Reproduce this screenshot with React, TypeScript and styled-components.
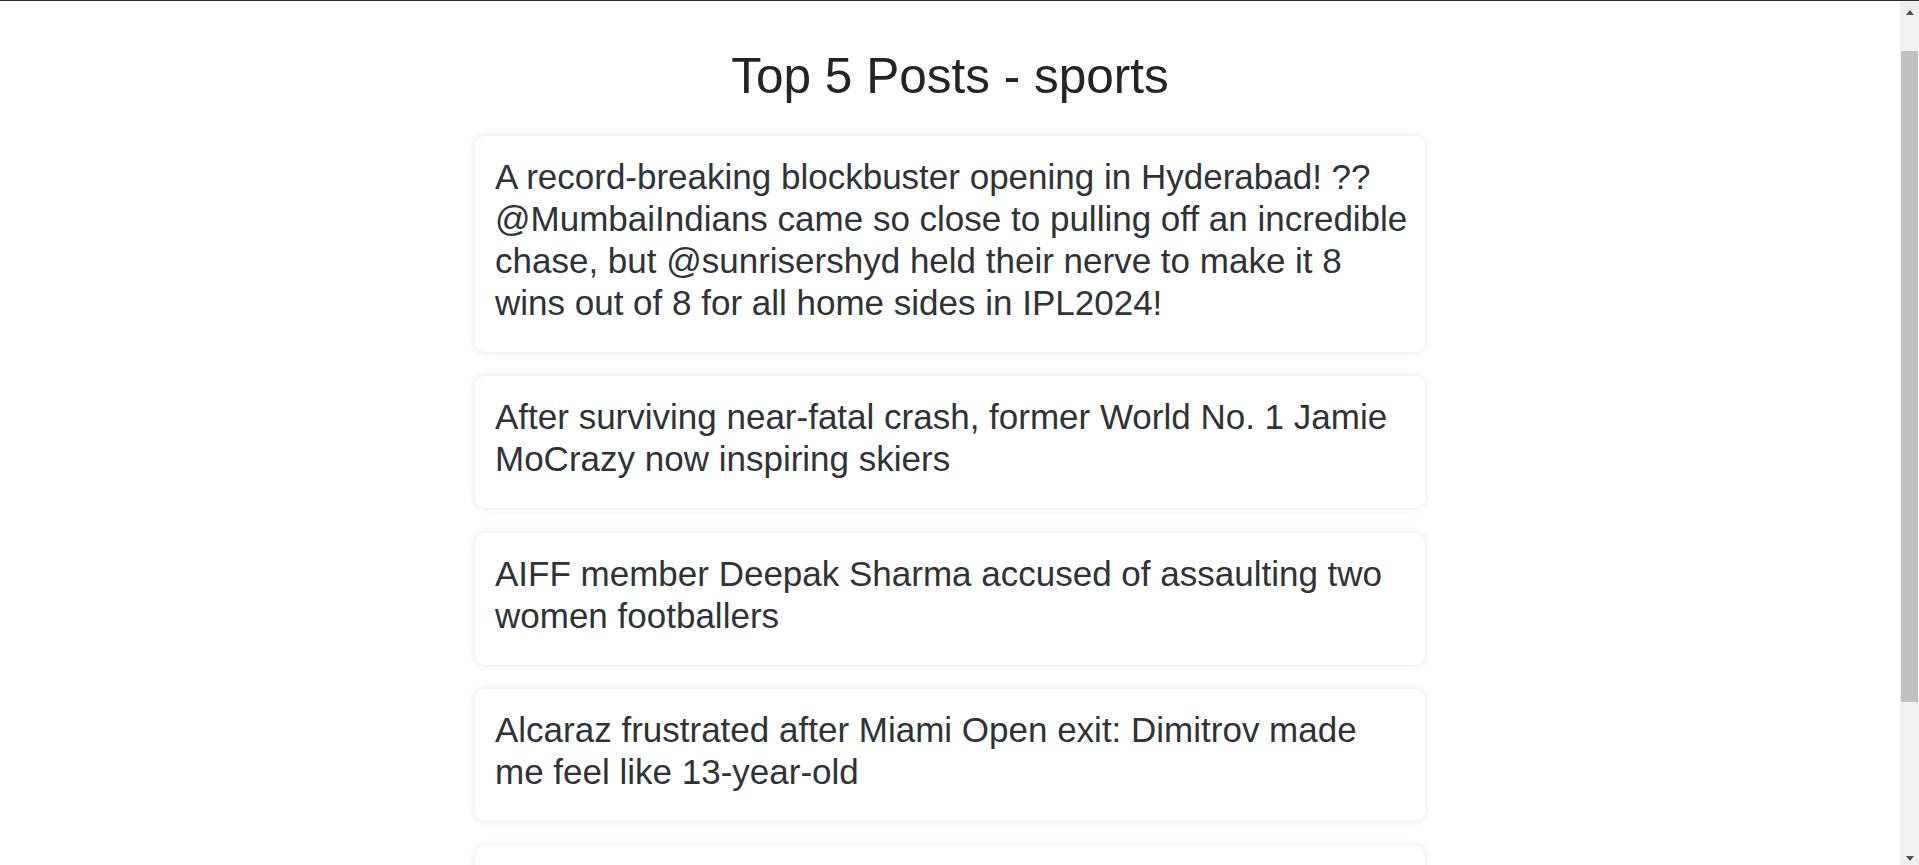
import React from "react";
import styled, { createGlobalStyle } from "styled-components";

const GlobalStyle = createGlobalStyle`
  html, body {
    margin: 0;
    padding: 0;
    height: 100%;
    overflow: hidden;
    background: #ffffff;
  }
  body {
    font-family: "Liberation Sans", Arial, sans-serif;
  }
  * { box-sizing: border-box; }
`;

const Frame = styled.div`
  height: 100vh;
  display: flex;
  border-top: 1px solid #2e2e2e;
  background: #ffffff;
`;

const Page = styled.main`
  flex: 1;
  min-width: 0;
  overflow: hidden;
  display: flex;
  flex-direction: column;
  align-items: center;
  padding-top: 46px;
`;

const Title = styled.h1`
  margin: 0 0 31px;
  font-family: "Liberation Sans", Arial, sans-serif;
  font-size: 49.5px;
  font-weight: 400;
  line-height: 57.6px;
  color: #212529;
  text-align: center;
`;

const PostList = styled.ul`
  list-style: none;
  margin: 0;
  padding: 0;
  width: 50%;
  display: flex;
  flex-direction: column;
  gap: 24.5px;
`;

const PostCard = styled.li`
  background: #ffffff;
  border-radius: 10px;
  box-shadow: 0 0 10px rgba(0, 0, 0, 0.1);
  padding: 20px 16px 28px 20px;
`;

const PostText = styled.p`
  margin: 0;
  font-family: "Liberation Sans", Arial, sans-serif;
  font-size: 35px;
  line-height: 42px;
  color: #2f3337;
`;

const Scrollbar = styled.div`
  width: 19px;
  flex: none;
  background: #f1f1f1;
  display: flex;
  flex-direction: column;
`;

const ArrowButton = styled.div<{ $dir: "up" | "down" }>`
  height: 17px;
  flex: none;
  display: flex;
  justify-content: center;
  align-items: ${(p) => (p.$dir === "up" ? "flex-end" : "flex-start")};
  padding: ${(p) => (p.$dir === "up" ? "0 0 3px" : "8px 0 0")};
`;

const Triangle = styled.span<{ $dir: "up" | "down" }>`
  width: 0;
  height: 0;
  border-left: 4.5px solid transparent;
  border-right: 4.5px solid transparent;
  ${(p) =>
    p.$dir === "up"
      ? "border-bottom: 5px solid #505050;"
      : "border-top: 5px solid #505050;"}
`;

const Track = styled.div`
  flex: 1;
  padding: 33px 1px 0 1px;
`;

const Thumb = styled.div`
  height: 651px;
  background: #c1c1c1;
`;

const posts = [
  "A record-breaking blockbuster opening in Hyderabad! ?? @MumbaiIndians came so close to pulling off an incredible chase, but @sunrisershyd held their nerve to make it 8 wins out of 8 for all home sides in IPL2024!",
  "After surviving near-fatal crash, former World No. 1 Jamie MoCrazy now inspiring skiers",
  "AIFF member Deepak Sharma accused of assaulting two women footballers",
  "Alcaraz frustrated after Miami Open exit: Dimitrov made me feel like 13-year-old",
  "Sports news of the day",
];

export default function App() {
  return (
    <>
      <GlobalStyle />
      <Frame>
        <Page>
          <Title>Top 5 Posts - sports</Title>
          <PostList>
            {posts.map((text, i) => (
              <PostCard key={i}>
                <PostText>{text}</PostText>
              </PostCard>
            ))}
          </PostList>
        </Page>
        <Scrollbar aria-hidden="true">
          <ArrowButton $dir="up">
            <Triangle $dir="up" />
          </ArrowButton>
          <Track>
            <Thumb />
          </Track>
          <ArrowButton $dir="down">
            <Triangle $dir="down" />
          </ArrowButton>
        </Scrollbar>
      </Frame>
    </>
  );
}
